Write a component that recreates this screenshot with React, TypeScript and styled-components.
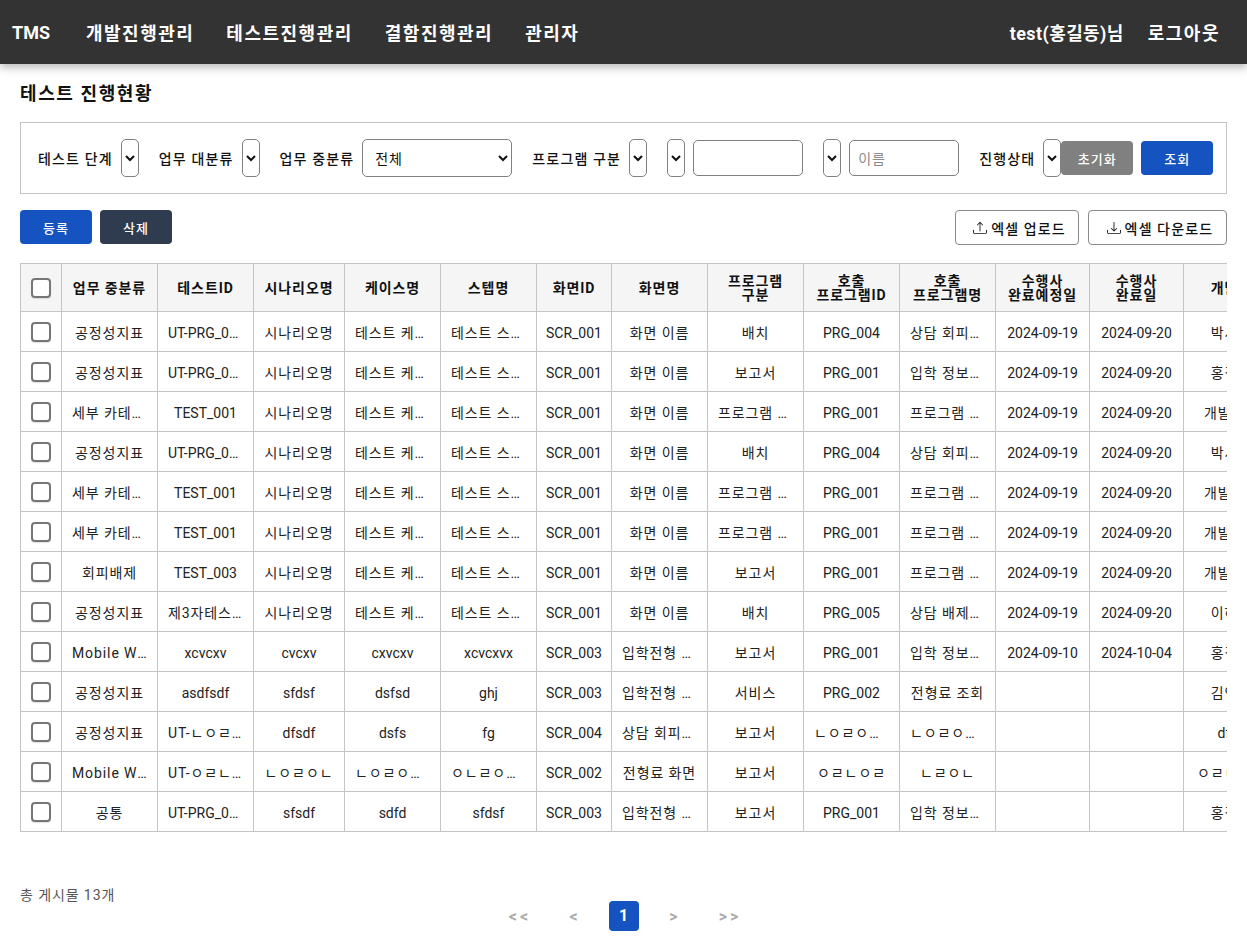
import React from 'react';
import styled, {createGlobalStyle} from 'styled-components';
import {BsDownload, BsUpload} from 'react-icons/bs';

const FONT = `"Noto Sans CJK KR", "Roboto", sans-serif`;
const LATIN = `"Roboto", "Noto Sans CJK KR", sans-serif`;

const GlobalStyle = createGlobalStyle`
  html, body {
    margin: 0;
    padding: 0;
    background: #fff;
    font-family: ${LATIN};
    overflow: hidden;
  }
  * { box-sizing: border-box; }
`;

const Page = styled.div`
  width: 1247px;
  height: 951px;
  overflow: hidden;
`;

const Header = styled.header`
  display: flex;
  justify-content: space-between;
  align-items: center;
  height: 64px;
  padding: 0 27px 0 12px;
  background-color: #333;
  box-shadow: 0 4px 8px rgba(0, 0, 0, 0.25);
  color: #fff;
  font-size: 18px;
  font-weight: 700;
`;

const Nav = styled.nav`
  display: flex;
  align-items: center;
  gap: 32px;
`;

const Logo = styled.span`
  margin-right: 4px;
`;

const NavItem = styled.span`
  letter-spacing: 1.5px;
`;

const UserArea = styled.div`
  display: flex;
  align-items: center;
  gap: 24px;
`;

const UserName = styled.span`
  letter-spacing: 0.4px;
`;

const Main = styled.main`
  padding: 18px 20px 0;
`;

const Title = styled.h2`
  margin: 0 0 18px;
  height: 22px;
  font-size: 18px;
  line-height: 23px;
  font-weight: 700;
  letter-spacing: 1.6px;
  color: #111;
`;

const FilterBox = styled.section`
  display: flex;
  align-items: center;
  gap: 20px;
  height: 72px;
  padding: 0 13px 0 17px;
  border: 1px solid #c4c4c4;
`;

const Group = styled.div`
  display: flex;
  align-items: center;
  gap: 8px;
`;

const Label = styled.label`
  font-size: 14px;
  font-weight: 500;
  letter-spacing: 1.15px;
  white-space: nowrap;
  color: #111;
`;

const Select = styled.select<{$width?: number}>`
  width: ${(p) => p.$width ?? 18}px;
  height: 38px;
  padding: 0 ${(p) => (p.$width ? 8 : 0)}px;
  border: 1px solid #808080;
  border-radius: 5px;
  background-color: #fff;
  font-family: ${FONT};
  font-size: 14px;
  letter-spacing: 0.9px;
  color: #111;
`;

const TextInput = styled.input`
  width: 110px;
  height: 36px;
  padding: 0 8px;
  border: 1px solid #808080;
  border-radius: 5px;
  font-family: ${FONT};
  font-size: 14px;
  letter-spacing: 0.9px;
  &::placeholder {
    color: #8a8a8a;
  }
`;

const ActionButton = styled.button<{$bg: string}>`
  width: 72px;
  height: 34px;
  border: none;
  border-radius: 4px;
  background-color: ${(p) => p.$bg};
  color: #fff;
  font-family: ${FONT};
  font-size: 13px;
  font-weight: 500;
  letter-spacing: 1px;
`;

const ResetGroup = styled.div`
  display: flex;
  gap: 8px;
  margin-left: -8px;
`;

const Toolbar = styled.div`
  display: flex;
  justify-content: space-between;
  align-items: flex-start;
  margin: 16px 0 18px;
`;

const ButtonRow = styled.div<{$gap: number}>`
  display: flex;
  gap: ${(p) => p.$gap}px;
`;

const ExcelButton = styled.button<{$width: number}>`
  display: flex;
  align-items: center;
  justify-content: center;
  gap: 4px;
  width: ${(p) => p.$width}px;
  height: 35px;
  padding: 0 0 0 5px;
  border: 1px solid #8a8a8a;
  border-radius: 4px;
  background-color: #fff;
  font-family: ${FONT};
  font-size: 14px;
  font-weight: 500;
  letter-spacing: 1.2px;
  color: #111;
`;

const TableWrap = styled.div`
  width: 1207px;
  overflow: hidden;
`;

const Table = styled.table`
  width: 1259px;
  table-layout: fixed;
  border-collapse: collapse;
  font-size: 14px;
  color: #222;
`;

const Col = styled.col<{$width: number}>`
  width: ${(p) => p.$width}px;
`;

const Th = styled.th`
  height: 48px;
  padding: 0;
  border: 1px solid #c4c4c4;
  background-color: #f5f5f5;
  font-size: 14px;
  font-weight: 700;
  letter-spacing: 0.9px;
  line-height: 14px;
  color: #111;
  text-align: center;
`;

const Td = styled.td<{$spacing: number; $tight?: boolean}>`
  height: 40px;
  padding: ${(p) => (p.$spacing ? 0 : 2)}px ${(p) => (p.$tight ? 0 : 10)}px 0;
  border: 1px solid #c4c4c4;
  overflow: hidden;
  white-space: nowrap;
  text-overflow: ellipsis;
  text-align: center;
  letter-spacing: ${(p) => p.$spacing}px;
`;

const CheckCell = styled.td`
  height: 40px;
  padding: 0;
  border: 1px solid #c4c4c4;
`;

const CheckBox = styled.span`
  display: block;
  width: 20px;
  height: 20px;
  margin: 0 auto;
  border: 2px solid #767676;
  border-radius: 4px;
  background-color: #fff;
  box-shadow: 0 1px 1px rgba(0, 0, 0, 0.12);
`;

const Footer = styled.footer`
  margin-top: 54px;
`;

const TotalCount = styled.div`
  height: 15px;
  font-size: 14px;
  line-height: 18px;
  letter-spacing: 0.9px;
  color: #555;
`;

const Pagination = styled.div`
  display: flex;
  justify-content: center;
  align-items: center;
`;

const PageLink = styled.span<{$offset?: number}>`
  width: 30px;
  margin-left: ${(p) => p.$offset ?? 0}px;
  font-size: 16px;
  font-weight: 700;
  letter-spacing: 3px;
  text-indent: 3px;
  color: #aaa;
  text-align: center;
`;

const PageCurrent = styled.span`
  width: 30px;
  height: 30px;
  margin: 0 20px;
  border-radius: 4px;
  background-color: #1553c0;
  color: #fff;
  font-size: 16px;
  font-weight: 700;
  line-height: 30px;
  text-align: center;
`;

const columns: Array<{width: number; label: React.ReactNode}> = [
  {width: 96, label: '업무 중분류'},
  {width: 96, label: '테스트ID'},
  {width: 91, label: '시나리오명'},
  {width: 96, label: '케이스명'},
  {width: 96, label: '스텝명'},
  {width: 75, label: '화면ID'},
  {width: 96, label: '화면명'},
  {width: 96, label: <>프로그램<br />구분</>},
  {width: 96, label: <>호출<br />프로그램ID</>},
  {width: 96, label: <>호출<br />프로그램명</>},
  {width: 94, label: <>수행사<br />완료예정일</>},
  {width: 94, label: <>수행사<br />완료일</>},
  {width: 96, label: '개발자'},
];

const T = '테스트 케이스 이름';
const S = '테스트 스텝 이름';
const N = '시나리오명';
const D1 = '2024-09-19';
const D2 = '2024-09-20';
const MW = 'Mobile Web 서비스';

const rows: string[][] = [
  ['공정성지표', 'UT-PRG_004_01', N, T, S, 'SCR_001', '화면 이름', '배치', 'PRG_004', '상담 회피배치', D1, D2, '박서준'],
  ['공정성지표', 'UT-PRG_001_01', N, T, S, 'SCR_001', '화면 이름', '보고서', 'PRG_001', '입학 정보조회', D1, D2, '홍길동'],
  ['세부 카테고리', 'TEST_001', N, T, S, 'SCR_001', '화면 이름', '프로그램 구분', 'PRG_001', '프로그램 이름', D1, D2, '개발자명'],
  ['공정성지표', 'UT-PRG_004_02', N, T, S, 'SCR_001', '화면 이름', '배치', 'PRG_004', '상담 회피배치', D1, D2, '박서준'],
  ['세부 카테고리', 'TEST_001', N, T, S, 'SCR_001', '화면 이름', '프로그램 구분', 'PRG_001', '프로그램 이름', D1, D2, '개발자명'],
  ['세부 카테고리', 'TEST_001', N, T, S, 'SCR_001', '화면 이름', '프로그램 구분', 'PRG_001', '프로그램 이름', D1, D2, '개발자명'],
  ['회피배제', 'TEST_003', N, T, S, 'SCR_001', '화면 이름', '보고서', 'PRG_001', '프로그램 이름', D1, D2, '개발자명'],
  ['공정성지표', '제3자테스트 01', N, T, S, 'SCR_001', '화면 이름', '배치', 'PRG_005', '상담 배제배치', D1, D2, '이하늘'],
  [MW, 'xcvcxv', 'cvcxv', 'cxvcxv', 'xcvcxvx', 'SCR_003', '입학전형 화면', '보고서', 'PRG_001', '입학 정보조회', '2024-09-10', '2024-10-04', '홍길동'],
  ['공정성지표', 'asdfsdf', 'sfdsf', 'dsfsd', 'ghj', 'SCR_003', '입학전형 화면', '서비스', 'PRG_002', '전형료 조회', '', '', '김영희'],
  ['공정성지표', 'UT-ㄴㅇㄹㅇㄴ', 'dfsdf', 'dsfs', 'fg', 'SCR_004', '상담 회피화면', '보고서', 'ㄴㅇㄹㅇㄴㅇ', 'ㄴㅇㄹㅇㄴㅇ', '', '', 'dfsd'],
  [MW, 'UT-ㅇㄹㄴㅇㄹ', 'ㄴㅇㄹㅇㄴ', 'ㄴㅇㄹㅇㄴㅇㄹ', 'ㅇㄴㄹㅇㄴㅇ', 'SCR_002', '전형료 화면', '보고서', 'ㅇㄹㄴㅇㄹ', 'ㄴㄹㅇㄴ', '', '', 'ㅇㄹㄴㅇㄹ'],
  ['공통', 'UT-PRG_001_02', 'sfsdf', 'sdfd', 'sfdsf', 'SCR_003', '입학전형 화면', '보고서', 'PRG_001', '입학 정보조회', '', '', '홍길동'],
];

// 한글은 자간을 넓힌다
const cellSpacing = (text: string): number => (/[가-힣ㄱ-ㅎ]/.test(text) ? 0.9 : 0);

// 날짜, 화면ID는 말줄임 없이 칸에 꽉 찬다
const isTight = (text: string): boolean => /^(\d{4}-|SCR_)/.test(text);

function App(): React.ReactElement {
  return (
    <Page>
      <GlobalStyle />
      <Header>
        <Nav>
          <Logo>TMS</Logo>
          <NavItem>개발진행관리</NavItem>
          <NavItem>테스트진행관리</NavItem>
          <NavItem>결함진행관리</NavItem>
          <NavItem>관리자</NavItem>
        </Nav>
        <UserArea>
          <UserName>test(홍길동)님</UserName>
          <NavItem>로그아웃</NavItem>
        </UserArea>
      </Header>
      <Main>
        <Title>테스트 진행현황</Title>
        <FilterBox>
          <Group>
            <Label>테스트 단계</Label>
            <Select><option>전체</option></Select>
          </Group>
          <Group>
            <Label>업무 대분류</Label>
            <Select><option>전체</option></Select>
          </Group>
          <Group>
            <Label>업무 중분류</Label>
            <Select $width={150}><option>전체</option></Select>
          </Group>
          <Group>
            <Label>프로그램 구분</Label>
            <Select><option>전체</option></Select>
          </Group>
          <Group>
            <Select><option>전체</option></Select>
            <TextInput />
          </Group>
          <Group>
            <Select><option>전체</option></Select>
            <TextInput placeholder='이름' />
          </Group>
          <Group>
            <Label>진행상태</Label>
            <Select><option>전체</option></Select>
            <ResetGroup>
              <ActionButton $bg='#808080'>초기화</ActionButton>
              <ActionButton $bg='#1553c0'>조회</ActionButton>
            </ResetGroup>
          </Group>
        </FilterBox>
        <Toolbar>
          <ButtonRow $gap={8}>
            <ActionButton $bg='#1553c0'>등록</ActionButton>
            <ActionButton $bg='#2f3b4f'>삭제</ActionButton>
          </ButtonRow>
          <ButtonRow $gap={9}>
            <ExcelButton $width={124}><BsUpload size={14} />엑셀 업로드</ExcelButton>
            <ExcelButton $width={139}><BsDownload size={14} />엑셀 다운로드</ExcelButton>
          </ButtonRow>
        </Toolbar>
        <TableWrap>
          <Table>
            <colgroup>
              <Col $width={41} />
              {columns.map((col, i) => <Col key={i} $width={col.width} />)}
            </colgroup>
            <thead>
              <tr>
                <Th><CheckBox /></Th>
                {columns.map((col, i) => <Th key={i}>{col.label}</Th>)}
              </tr>
            </thead>
            <tbody>
              {rows.map((row, r) => (
                <tr key={r}>
                  <CheckCell><CheckBox /></CheckCell>
                  {row.map((cell, c) => (
                    <Td key={c} $spacing={cellSpacing(cell)} $tight={isTight(cell)}>{cell}</Td>
                  ))}
                </tr>
              ))}
            </tbody>
          </Table>
        </TableWrap>
        <Footer>
          <TotalCount>총 게시물 13개</TotalCount>
          <Pagination>
            <PageLink>&lt;&lt;</PageLink>
            <PageLink $offset={25}>&lt;</PageLink>
            <PageCurrent>1</PageCurrent>
            <PageLink>&gt;</PageLink>
            <PageLink $offset={25}>&gt;&gt;</PageLink>
          </Pagination>
        </Footer>
      </Main>
    </Page>
  );
}

export default App;
